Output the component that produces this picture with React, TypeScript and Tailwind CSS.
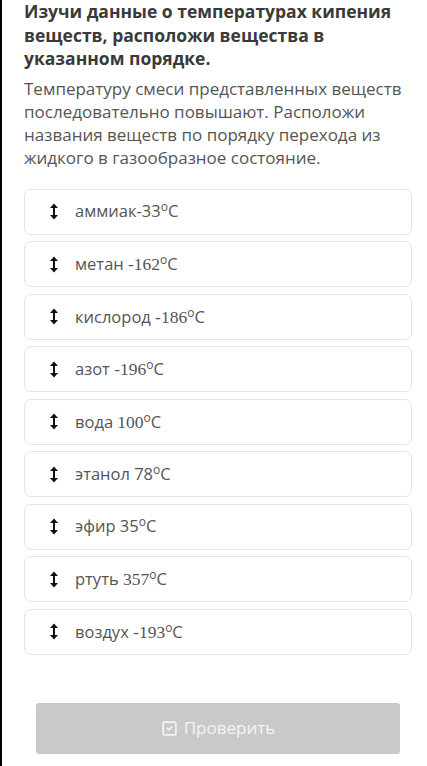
import { SquareCheck } from 'lucide-react';

type Item = { name: string; num: string; serif: boolean };

const items: Item[] = [
  { name: 'аммиак', num: '-33', serif: false },
  { name: 'метан ', num: '-162', serif: true },
  { name: 'кислород ', num: '-186', serif: true },
  { name: 'азот ', num: '-196', serif: true },
  { name: 'вода ', num: '100', serif: true },
  { name: 'этанол ', num: '78', serif: false },
  { name: 'эфир ', num: '35', serif: false },
  { name: 'ртуть ', num: '357', serif: true },
  { name: 'воздух ', num: '-193', serif: true },
];

function UpDown() {
  return (
    <svg width="8" height="17" viewBox="0 0 8 17" className="shrink-0">
      <line x1="4" y1="3" x2="4" y2="14" stroke="#111" strokeWidth="2" />
      <path d="M0 5 L4 0.5 L8 5 Z" fill="#111" />
      <path d="M0 12 L4 16.5 L8 12 Z" fill="#111" />
    </svg>
  );
}

export default function App() {
  return (
    <div
      className="min-h-[766px] w-[427px] border-l-2 border-black bg-white"
      style={{ fontFamily: '"Open Sans", sans-serif' }}
    >
      <div className="pl-[22px] pr-[10px]">
        <h1 className="text-[17.5px] font-bold leading-[23.5px] text-[#3a3a3a]">
          Изучи данные о температурах кипения веществ, расположи вещества в
          указанном порядке.
        </h1>
        <p className="mt-[6px] text-[17px] leading-[23.3px] text-[#555]">
          Температуру смеси представленных веществ последовательно повышают.
          Расположи названия веществ по порядку перехода из жидкого в
          газообразное состояние.
        </p>
      </div>

      <div className="mt-[19px] flex flex-col gap-[6.5px] pl-[22px] pr-[15px]">
        {items.map((it) => (
          <div
            key={it.name}
            className="flex h-[46px] items-center rounded-[7px] border border-[#e4e4e4] bg-white pl-[25px]"
          >
            <UpDown />
            <span className="ml-[17px] text-[16.5px] text-[#555]">
              {it.name}
              <span
                style={
                  it.serif
                    ? { fontFamily: '"Liberation Serif", serif', fontSize: '17.5px' }
                    : undefined
                }
              >
                {it.num}
              </span>
              <span className="relative -top-[6px] text-[12px]">o</span>C
            </span>
          </div>
        ))}
      </div>

      <div className="mt-[48px] pl-[34px] pr-[27px]">
        <button className="flex h-[51px] w-full items-center justify-center gap-[6px] rounded-[3px] bg-[#c9c9c9] text-[17px] text-[#f4f4f4]">
          <SquareCheck size={17} strokeWidth={2.4} />
          Проверить
        </button>
      </div>
    </div>
  );
}
